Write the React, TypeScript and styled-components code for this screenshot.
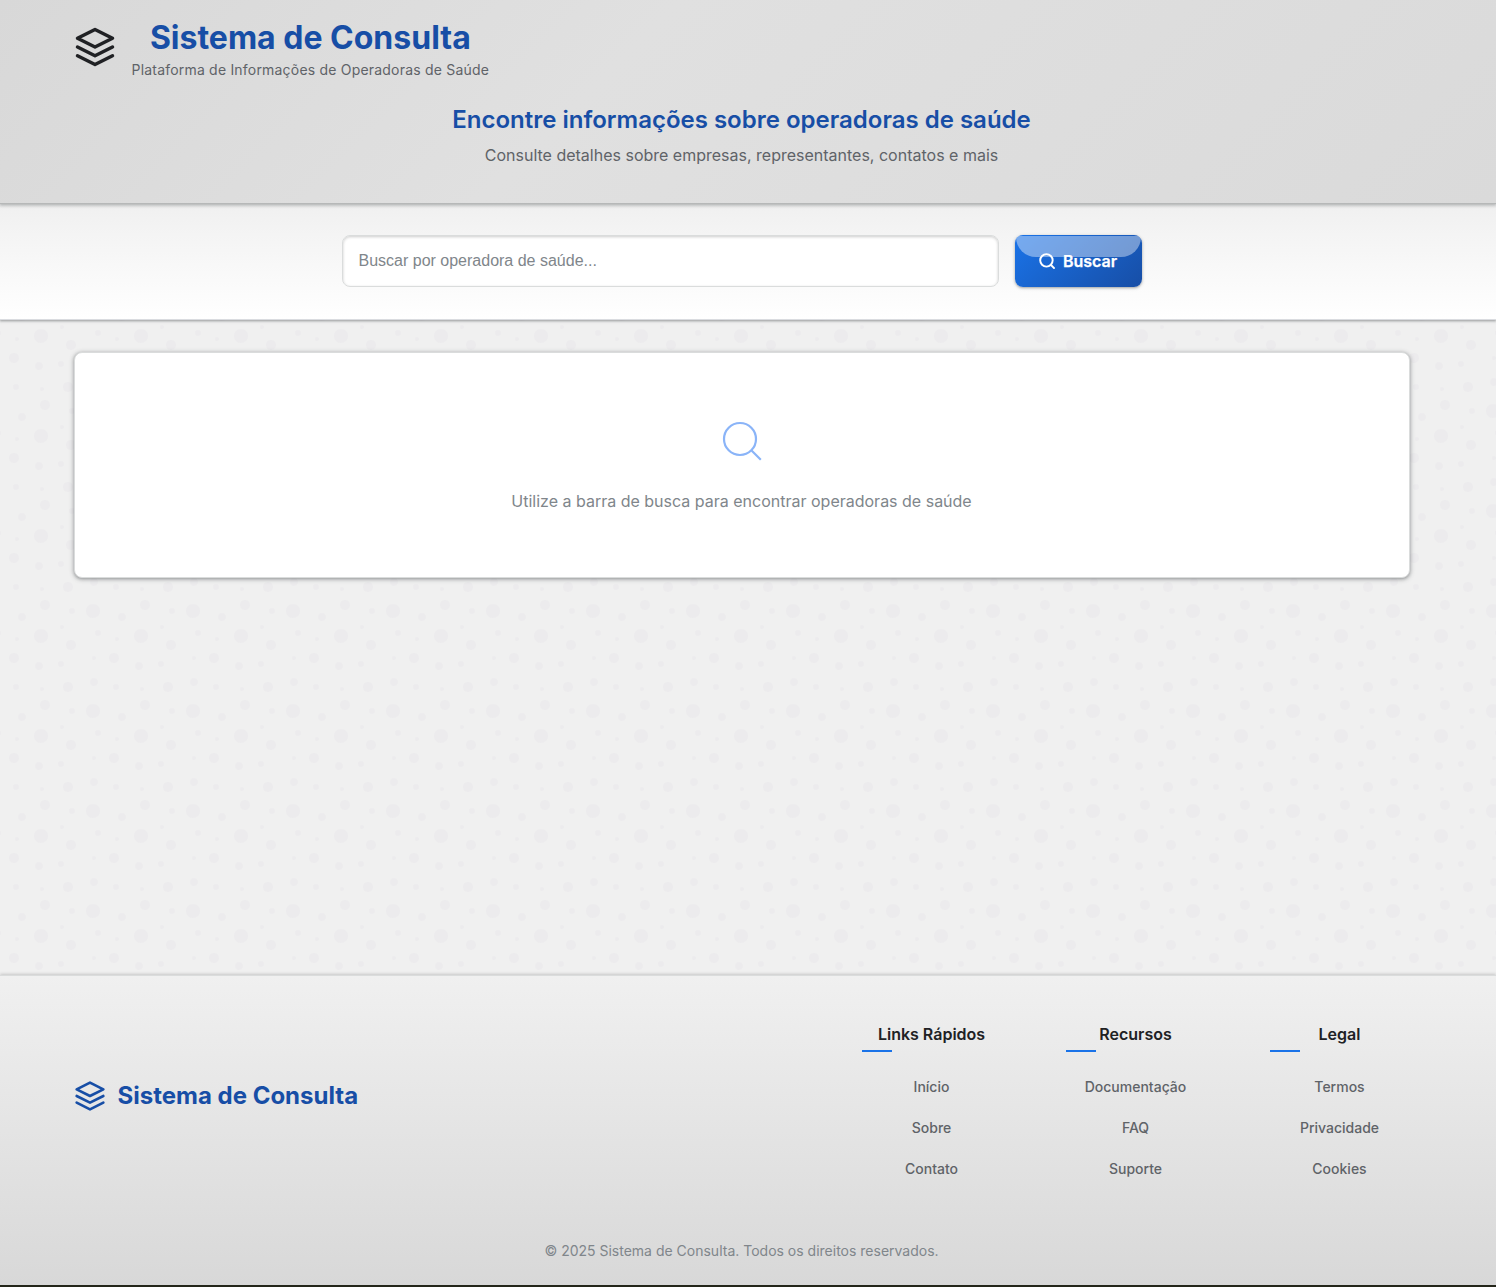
import React from 'react';
import styled, { createGlobalStyle } from 'styled-components';

const bubbles = encodeURIComponent(
  `<svg width="100" height="100" viewBox="0 0 100 100" xmlns="http://www.w3.org/2000/svg"><path d="M11 18c3.866 0 7-3.134 7-7s-3.134-7-7-7-7 3.134-7 7 3.134 7 7 7zm48 25c3.866 0 7-3.134 7-7s-3.134-7-7-7-7 3.134-7 7 3.134 7 7 7zm-43-7c1.657 0 3-1.343 3-3s-1.343-3-3-3-3 1.343-3 3 1.343 3 3 3zm63 31c1.657 0 3-1.343 3-3s-1.343-3-3-3-3 1.343-3 3 1.343 3 3 3zM34 90c1.657 0 3-1.343 3-3s-1.343-3-3-3-3 1.343-3 3 1.343 3 3 3zm56-76c1.657 0 3-1.343 3-3s-1.343-3-3-3-3 1.343-3 3 1.343 3 3 3zM12 86c2.21 0 4-1.79 4-4s-1.79-4-4-4-4 1.79-4 4 1.79 4 4 4zm28-65c2.21 0 4-1.79 4-4s-1.79-4-4-4-4 1.79-4 4 1.79 4 4 4zm23-11c2.76 0 5-2.24 5-5s-2.24-5-5-5-5 2.24-5 5 2.24 5 5 5zm-6 60c2.21 0 4-1.79 4-4s-1.79-4-4-4-4 1.79-4 4 1.79 4 4 4zm29 22c2.76 0 5-2.24 5-5s-2.24-5-5-5-5 2.24-5 5 2.24 5 5 5zM32 63c2.76 0 5-2.24 5-5s-2.24-5-5-5-5 2.24-5 5 2.24 5 5 5zm57-13c2.76 0 5-2.24 5-5s-2.24-5-5-5-5 2.24-5 5 2.24 5 5 5zm-9-21c1.105 0 2-.895 2-2s-.895-2-2-2-2 .895-2 2 .895 2 2 2zM60 91c1.105 0 2-.895 2-2s-.895-2-2-2-2 .895-2 2 .895 2 2 2zM35 41c1.105 0 2-.895 2-2s-.895-2-2-2-2 .895-2 2 .895 2 2 2zM12 60c1.105 0 2-.895 2-2s-.895-2-2-2-2 .895-2 2 .895 2 2 2z" fill="#9C92AC" fill-opacity="0.05" fill-rule="evenodd"/></svg>`
);

const Global = createGlobalStyle`
  *, *::before, *::after { box-sizing: border-box; }
  body { margin: 0; background: #24261a; }
  h1, h2, h3, p, ul { margin: 0; padding: 0; }
`;

const Page = styled.div`
  display: flex;
  flex-direction: column;
  height: 1287px;
  overflow: hidden;
  font-family: Inter, 'Liberation Sans', sans-serif;
  color: #202124;
  text-align: center;
  border-bottom: 2px solid #24261a;
  background: #f0f0f0 url("data:image/svg+xml,${bubbles}") 82px 0;
`;

const Container = styled.div`
  width: 100%;
  padding: 0 86.5px 0 73.5px;
`;

const Header = styled.header`
  position: relative;
  z-index: 2;
  flex: none;
  height: 204px;
  padding-top: 16px;
  background: linear-gradient(135deg, #d8d8d8 0%, #e0e0e0 40%, #dadada 100%);
  border-bottom: 1px solid #b6b8b8;
  box-shadow: 0 1px 3px rgba(60, 64, 67, 0.25), 0 1px 3px 1px rgba(60, 64, 67, 0.15);
`;

const Brand = styled.div`
  display: flex;
  align-items: center;
  gap: 16px;
  height: 62px;
`;

const SiteTitle = styled.h1`
  padding-top: 2px;
  font-size: 32px;
  line-height: 42px;
  font-weight: 700;
  color: #174ea6;
`;

const Tagline = styled.p`
  padding-top: 1px;
  font-size: 14px;
  line-height: 20px;
  letter-spacing: 0.2px;
  color: #5f6368;
`;

const Hero = styled.div`
  margin-top: 24px;
`;

const HeroTitle = styled.h2`
  font-size: 24px;
  line-height: 36px;
  font-weight: 600;
  color: #174ea6;
`;

const HeroText = styled.p`
  margin-top: 5px;
  font-size: 16px;
  line-height: 24px;
  color: #5f6368;
`;

const SearchSection = styled.section`
  position: relative;
  z-index: 1;
  flex: none;
  height: 116px;
  padding: 31px 13px 0 0;
  background: linear-gradient(180deg, #f0f0f0, #ffffff);
  border-bottom: 1px solid #dadce0;
  box-shadow: 0 1px 2px rgba(60, 64, 67, 0.4), 0 1px 3px 1px rgba(60, 64, 67, 0.1);
`;

const SearchForm = styled.form`
  display: flex;
  gap: 16px;
  width: 800px;
  height: 52px;
  margin: 0 auto;
`;

const SearchInput = styled.input`
  flex: 1;
  min-width: 0;
  padding: 0 16px;
  border: 1px solid #dadcdc;
  border-radius: 8px;
  background: #fff;
  box-shadow: inset 0 1px 3px rgba(0, 0, 0, 0.2);
  font: 16px 'Liberation Sans', Arial, sans-serif;
  &::placeholder { color: #80868b; opacity: 1; }
`;

const SearchButton = styled.button`
  position: relative;
  display: flex;
  align-items: center;
  justify-content: center;
  gap: 8px;
  width: 127px;
  padding: 0;
  border: 0;
  border-radius: 8px;
  overflow: hidden;
  background: linear-gradient(135deg, #1a73e8, #174ea6);
  box-shadow: 0 1px 2px rgba(60, 64, 67, 0.3), 0 1px 3px 1px rgba(60, 64, 67, 0.15);
  color: #fff;
  font: 600 16px Inter, sans-serif;
  &::before {
    content: '';
    position: absolute;
    top: 1px;
    left: 1px;
    right: 1px;
    height: 21px;
    border-radius: 0 0 20px 20px;
    background: rgba(255, 255, 255, 0.4);
  }
`;

const ButtonIcon = styled.svg`
  position: relative;
`;

const ButtonLabel = styled.span`
  position: relative;
  -webkit-text-stroke: 0.25px #fff;
`;

const Main = styled.main`
  flex: 1;
  padding-top: 32px;
`;

const EmptyCard = styled.div`
  display: flex;
  flex-direction: column;
  align-items: center;
  height: 226px;
  padding-top: 64px;
  border: 1px solid #dadcdc;
  border-radius: 8px;
  background: #fff;
  box-shadow: 0 1px 3px rgba(60, 64, 67, 0.3), 0 1px 4px 1px rgba(60, 64, 67, 0.25);
`;

const EmptyText = styled.p`
  margin-top: 24px;
  font-size: 16px;
  line-height: 24px;
  color: #80868b;
`;

const Footer = styled.footer`
  flex: none;
  height: 310px;
  padding-top: 47px;
  background: linear-gradient(180deg, #f0f0f0, #d8d8d8);
  border-top: 1px solid #dadcdc;
  box-shadow: 0 -1px 3px rgba(0, 0, 0, 0.18);
`;

const FooterRow = styled.div`
  display: flex;
  align-items: center;
  justify-content: space-between;
  height: 146px;
`;

const FooterBrand = styled.div`
  display: flex;
  align-items: center;
  gap: 12px;
  font-size: 24px;
  line-height: 32px;
  font-weight: 700;
  color: #174ea6;
`;

const Columns = styled.div`
  display: flex;
  gap: 64px;
  align-self: flex-start;
`;

const Column = styled.div`
  width: 140px;
`;

const ColumnTitle = styled.h3`
  height: 29px;
  font-size: 16px;
  line-height: 22px;
  font-weight: 600;
  &::after {
    content: '';
    display: block;
    width: 30px;
    height: 2px;
    margin-top: 5px;
    background: #1a73e8;
  }
`;

const LinkList = styled.ul`
  display: grid;
  gap: 20px;
  margin-top: 24px;
  list-style: none;
`;

const LinkItem = styled.li`
  font-size: 14px;
  line-height: 21px;
  font-weight: 500;
  color: #5f6368;
`;

const Copyright = styled.p`
  margin-top: 71px;
  font-size: 14px;
  line-height: 22px;
  color: #80868b;
`;

const Layers = ({ size }: { size: number }) => (
  <svg width={size} height={size} viewBox="0 0 24 24" fill="none" stroke="currentColor" strokeWidth="2" strokeLinecap="round" strokeLinejoin="round">
    <path d="M12 2L2 7l10 5 10-5-10-5z" />
    <path d="M2 17l10 5 10-5" />
    <path d="M2 12l10 5 10-5" />
  </svg>
);

const columns = [
  { title: 'Links Rápidos', links: ['Início', 'Sobre', 'Contato'] },
  { title: 'Recursos', links: ['Documentação', 'FAQ', 'Suporte'] },
  { title: 'Legal', links: ['Termos', 'Privacidade', 'Cookies'] },
];

export default function App() {
  return (
    <Page>
      <Global />
      <Header>
        <Container>
          <Brand>
            <Layers size={42} />
            <div>
              <SiteTitle>Sistema de Consulta</SiteTitle>
              <Tagline>Plataforma de Informações de Operadoras de Saúde</Tagline>
            </div>
          </Brand>
          <Hero>
            <HeroTitle>Encontre informações sobre operadoras de saúde</HeroTitle>
            <HeroText>Consulte detalhes sobre empresas, representantes, contatos e mais</HeroText>
          </Hero>
        </Container>
      </Header>
      <SearchSection>
        <SearchForm onSubmit={(e) => e.preventDefault()}>
          <SearchInput placeholder="Buscar por operadora de saúde..." />
          <SearchButton type="submit">
            <ButtonIcon width="16" height="16" viewBox="2 2 20 20" fill="none" stroke="#fff" strokeWidth="2.4">
              <circle cx="11.3" cy="11.2" r="7.8" />
              <path d="M21.6 21.6l-4.9-4.9" />
            </ButtonIcon>
            <ButtonLabel>Buscar</ButtonLabel>
          </SearchButton>
        </SearchForm>
      </SearchSection>
      <Main>
        <Container>
          <EmptyCard>
            <svg width="48" height="48" viewBox="0 0 24 24" fill="none" stroke="#8ab4f8" strokeWidth="1.1">
              <circle cx="11" cy="11" r="8" />
              <path d="M21.4 21.4l-4.75-4.75" />
            </svg>
            <EmptyText>Utilize a barra de busca para encontrar operadoras de saúde</EmptyText>
          </EmptyCard>
        </Container>
      </Main>
      <Footer>
        <Container>
          <FooterRow>
            <FooterBrand>
              <Layers size={32} />
              <span>Sistema de Consulta</span>
            </FooterBrand>
            <Columns>
              {columns.map((c) => (
                <Column key={c.title}>
                  <ColumnTitle>{c.title}</ColumnTitle>
                  <LinkList>
                    {c.links.map((l) => (
                      <LinkItem key={l}>{l}</LinkItem>
                    ))}
                  </LinkList>
                </Column>
              ))}
            </Columns>
          </FooterRow>
          <Copyright>© 2025 Sistema de Consulta. Todos os direitos reservados.</Copyright>
        </Container>
      </Footer>
    </Page>
  );
}
